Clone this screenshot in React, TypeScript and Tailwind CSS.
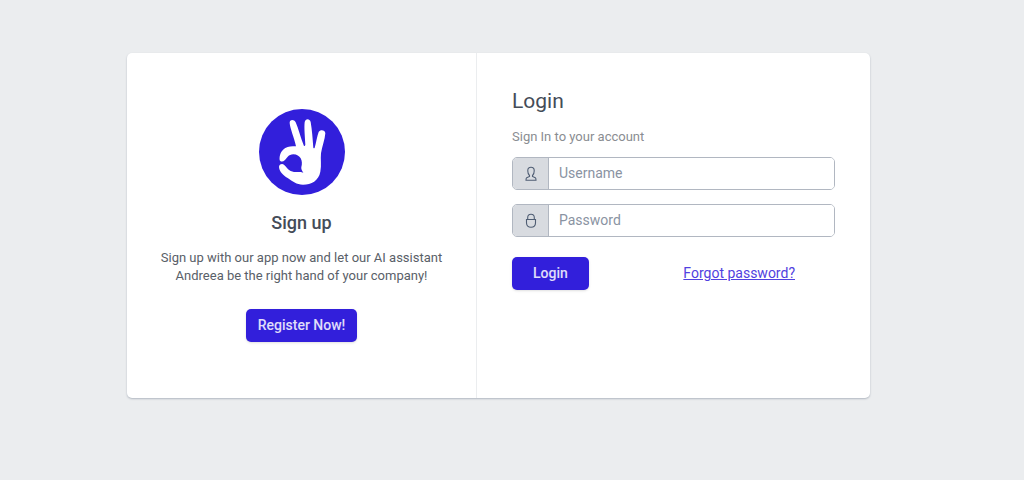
import React from "react";

const Logo = () => (
  <svg className="size-[86px]" viewBox="22 20 258 258" aria-hidden="true">
    <circle cx="151" cy="149" r="129" fill="#321fdb" />
    <path
      fill="#fff"
      d="M84 174C82 158 89 144 101 137C110 132 120 132 133 132C128 108 115 78 114 62C113 51 127 49 132 60C140 78 147 107 157 131Q160 132 161 127C160 105 157 76 159 60C161 48 174 48 177 59C181 81 183 110 185 136Q187 140 189 136C194 119 196 102 201 89C206 80 221 83 221 93C220 112 211 133 208 153C206 171 210 188 206 208C201 235 179 247 154 247C134 247 123 237 108 227C94 218 84 210 82 194C82 186 91 182 97 187C105 193 108 202 117 206C130 212 143 207 155 211C150 204 148 199 149 194C155 176 146 156 125 156C110 156 106 168 99 174C94 179 87 179 84 174Z"
    />
  </svg>
);

const UserIcon = () => (
  <svg className="size-4" viewBox="0 0 16 16" fill="none" stroke="#4f5d73" strokeWidth="1.1" aria-hidden="true">
    <path d="M6.500 9.500C5.300 8.500 4.800 7 4.800 5V4.500C4.800 2.600 6 1.300 8 1.300S11.200 2.600 11.200 4.500V5C11.200 7 10.700 8.500 9.500 9.500V10.500L12.300 11.800Q13 12.200 13 14.300H3Q3 12.200 3.700 11.800L6.500 10.500Z" />
  </svg>
);

const LockIcon = () => (
  <svg className="size-4" viewBox="0 0 16 16" fill="none" stroke="#4f5d73" strokeWidth="1.100" aria-hidden="true">
    <path d="M3.500 6.500H12.500V9.700C12.500 12.500 10.700 14.300 8 14.300S3.500 12.500 3.500 9.700ZM4.700 6.500V4.700C4.700 2.700 6 1.300 8 1.300S11.300 2.700 11.300 4.700V6.500" />
  </svg>
);

const addonStyle =
  "flex w-9 shrink-0 items-center justify-center border-r border-[#b1b7c1] bg-[#d8dbe0]";
const groupStyle =
  "flex h-[33px] overflow-hidden rounded-[5px] border border-[#b1b7c1] focus-within:border-[#321fdb]";
const inputStyle =
  "w-full min-w-0 bg-white px-[10px] text-[14px] text-[#4f5d73] outline-none placeholder:text-[#8a93a2]";
const buttonStyle =
  "h-[33px] cursor-pointer rounded-[5px] bg-[#321fdb] text-[14px] font-medium text-white/85 shadow-sm hover:bg-[#2a1ab9]";

const Login = () => {
  return (
    <main className="min-h-screen bg-[#ebedef] py-[53px] pr-[154px] pl-[127px] font-[Roboto,sans-serif] text-[#3c4b64]">
      <div className="grid grid-cols-[350fr_393fr] rounded-[5px] bg-white shadow-[0_1px_2px_#3c4b6455]">
        <section className="flex flex-col items-center border-r border-[#ebedef] px-8 pt-14 pb-14 text-center">
          <Logo />
          <h2 className="mt-4 text-[18px] leading-6 font-medium text-[#444c58]">Sign up</h2>
          <p className="mt-[14px] text-[13px] leading-[18px] text-[#596068]">
            Sign up with our app now and let our AI assistant Andreea be the
            right hand of your company!
          </p>
          <button type="button" className={`mt-6 px-3 ${buttonStyle}`}>
            Register Now!
          </button>
        </section>
        <form className="px-[35px] pt-9" onSubmit={(e) => e.preventDefault()}>
          <h1 className="text-[21px] leading-6 text-[#444c58]">Login</h1>
          <p className="mt-4 text-[13px] leading-4 text-[#8a8d92]">
            Sign In to your account
          </p>
          <div className={`mt-3 ${groupStyle}`}>
            <label htmlFor="username" aria-label="Username" className={addonStyle}>
              <UserIcon />
            </label>
            <input id="username" type="text" placeholder="Username" className={inputStyle} />
          </div>
          <div className={`mt-[14px] ${groupStyle}`}>
            <label htmlFor="password" aria-label="Password" className={addonStyle}>
              <LockIcon />
            </label>
            <input id="password" type="password" placeholder="Password" className={inputStyle} />
          </div>
          <div className="mt-5 flex items-center justify-between pr-10">
            <button type="submit" className={`px-[21px] ${buttonStyle}`}>
              Login
            </button>
            <a href="#forgot" className="text-[14px] text-[#5141e0] underline">
              Forgot password?
            </a>
          </div>
        </form>
      </div>
    </main>
  );
};

export default Login;
